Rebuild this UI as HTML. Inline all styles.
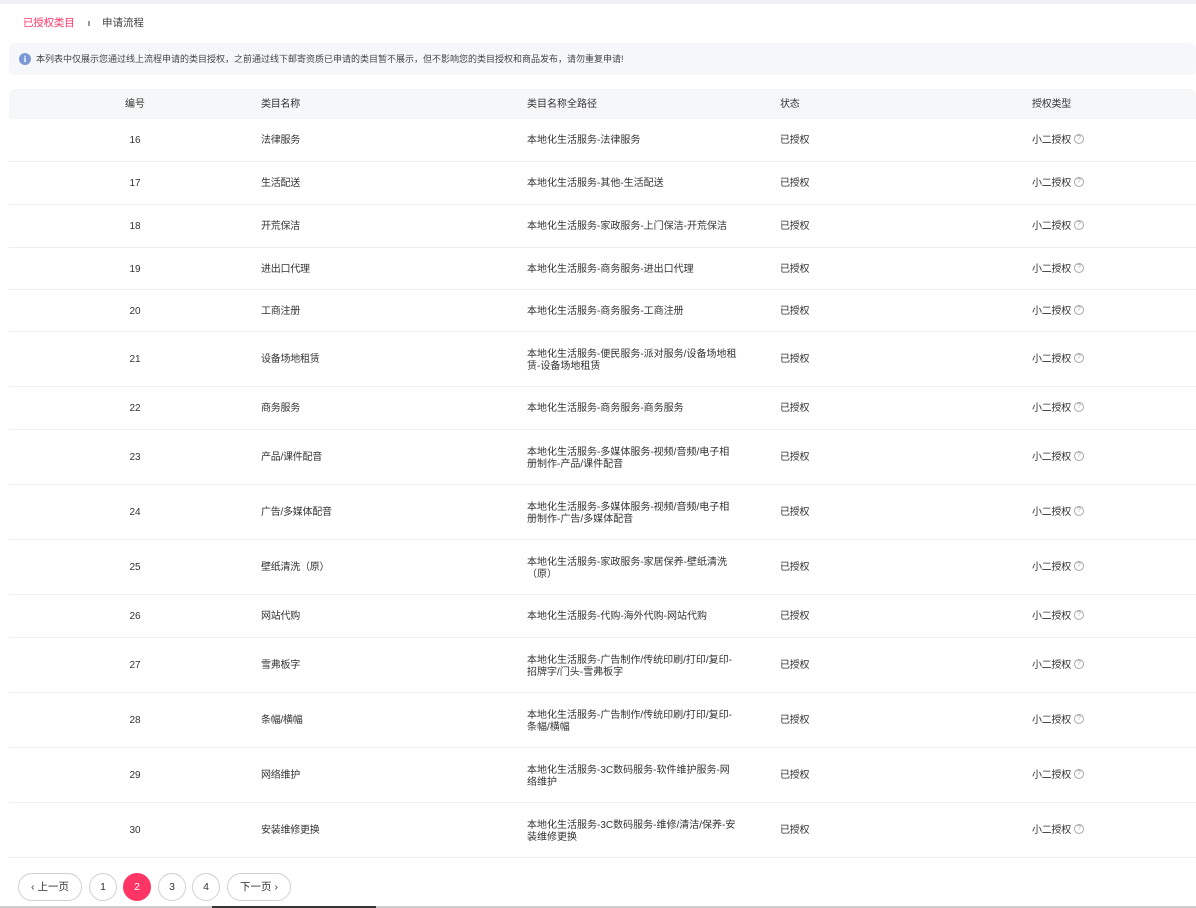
<!DOCTYPE html>
<html><head><meta charset="utf-8"><style>
*{margin:0;padding:0;box-sizing:border-box}
body{width:1196px;height:908px;overflow:hidden;background:#fff;font-family:"Liberation Sans","Noto Sans CJK SC",sans-serif;color:#333;font-size:10px;position:relative}
.top{height:4px;background:#eef0f5}
.tabs{position:absolute;top:16px;left:23px;font-size:10.5px;line-height:14px}
.tabs .a{color:#ff3566;letter-spacing:-0.2px}
.tabs .sep{position:absolute;left:65px;top:5px;width:2px;height:5px;background:#999}
.tabs .b{position:absolute;left:79px;top:0;white-space:nowrap;color:#444}
.note{position:absolute;left:9px;top:43px;width:1187px;height:32px;background:#f6f7fa;border-radius:6px;font-size:9px;line-height:32px;padding-left:27px;color:#444;white-space:nowrap}
.note i{position:absolute;left:10px;top:10px;width:12px;height:12px;border-radius:50%;background:#7b97d6;color:#fff;font-style:normal;font-size:9px;line-height:12px;text-align:center;font-weight:bold;font-family:"Liberation Serif",serif}
.tbl{position:absolute;left:9px;top:89px;width:1187px}
.hd{height:30px;background:#f6f7f9;border-radius:6px 6px 0 0;position:relative}
.row{position:relative;border-bottom:1px solid #eeeff2}
.c{position:absolute;top:50%;transform:translateY(-42%);white-space:nowrap;line-height:12px;letter-spacing:-0.25px}
.c1{left:0;width:252px;text-align:center;letter-spacing:0}
.c2{left:252px}.c3{left:518px;letter-spacing:0}.c4{left:771px}.c5{left:1023px}
.q{display:inline-block;width:10px;height:10px;border:1px solid #aaa;border-radius:50%;font-size:7px;line-height:8px;text-align:center;color:#999;margin-left:3px;vertical-align:middle;letter-spacing:0;position:relative;top:-1px}
.pg{position:absolute;top:873px;height:28px;border:1px solid #cfd0d6;border-radius:14px;font-size:10.5px;line-height:26px;text-align:center;color:#333}
.on{background:#ff3566;border-color:#ff3566;color:#fff}
</style></head><body>
<div class="top"></div>
<div class="tabs"><span class="a">已授权类目</span><span class="sep"></span><span class="b">申请流程</span></div>
<div class="note"><i>i</i>本列表中仅展示您通过线上流程申请的类目授权，之前通过线下邮寄资质已申请的类目暂不展示，但不影响您的类目授权和商品发布，请勿重复申请!</div>
<div class="tbl">
<div class="hd"><span class="c c1">编号</span><span class="c c2">类目名称</span><span class="c c3">类目名称全路径</span><span class="c c4">状态</span><span class="c c5">授权类型</span></div>
<div class="row" style="height:43px"><span class="c c1">16</span><span class="c c2">法律服务</span><span class="c c3">本地化生活服务-法律服务</span><span class="c c4">已授权</span><span class="c c5">小二授权<span class="q">?</span></span></div>
<div class="row" style="height:43px"><span class="c c1">17</span><span class="c c2">生活配送</span><span class="c c3">本地化生活服务-其他-生活配送</span><span class="c c4">已授权</span><span class="c c5">小二授权<span class="q">?</span></span></div>
<div class="row" style="height:43px"><span class="c c1">18</span><span class="c c2">开荒保洁</span><span class="c c3">本地化生活服务-家政服务-上门保洁-开荒保洁</span><span class="c c4">已授权</span><span class="c c5">小二授权<span class="q">?</span></span></div>
<div class="row" style="height:42px"><span class="c c1">19</span><span class="c c2">进出口代理</span><span class="c c3">本地化生活服务-商务服务-进出口代理</span><span class="c c4">已授权</span><span class="c c5">小二授权<span class="q">?</span></span></div>
<div class="row" style="height:42px"><span class="c c1">20</span><span class="c c2">工商注册</span><span class="c c3">本地化生活服务-商务服务-工商注册</span><span class="c c4">已授权</span><span class="c c5">小二授权<span class="q">?</span></span></div>
<div class="row" style="height:55px"><span class="c c1">21</span><span class="c c2">设备场地租赁</span><span class="c c3">本地化生活服务-便民服务-派对服务/设备场地租<br>赁-设备场地租赁</span><span class="c c4">已授权</span><span class="c c5">小二授权<span class="q">?</span></span></div>
<div class="row" style="height:43px"><span class="c c1">22</span><span class="c c2">商务服务</span><span class="c c3">本地化生活服务-商务服务-商务服务</span><span class="c c4">已授权</span><span class="c c5">小二授权<span class="q">?</span></span></div>
<div class="row" style="height:55px"><span class="c c1">23</span><span class="c c2">产品/课件配音</span><span class="c c3">本地化生活服务-多媒体服务-视频/音频/电子相<br>册制作-产品/课件配音</span><span class="c c4">已授权</span><span class="c c5">小二授权<span class="q">?</span></span></div>
<div class="row" style="height:55px"><span class="c c1">24</span><span class="c c2">广告/多媒体配音</span><span class="c c3">本地化生活服务-多媒体服务-视频/音频/电子相<br>册制作-广告/多媒体配音</span><span class="c c4">已授权</span><span class="c c5">小二授权<span class="q">?</span></span></div>
<div class="row" style="height:55px"><span class="c c1">25</span><span class="c c2">壁纸清洗（原）</span><span class="c c3">本地化生活服务-家政服务-家居保养-壁纸清洗<br>（原）</span><span class="c c4">已授权</span><span class="c c5">小二授权<span class="q">?</span></span></div>
<div class="row" style="height:43px"><span class="c c1">26</span><span class="c c2">网站代购</span><span class="c c3">本地化生活服务-代购-海外代购-网站代购</span><span class="c c4">已授权</span><span class="c c5">小二授权<span class="q">?</span></span></div>
<div class="row" style="height:55px"><span class="c c1">27</span><span class="c c2">雪弗板字</span><span class="c c3">本地化生活服务-广告制作/传统印刷/打印/复印-<br>招牌字/门头-雪弗板字</span><span class="c c4">已授权</span><span class="c c5">小二授权<span class="q">?</span></span></div>
<div class="row" style="height:55px"><span class="c c1">28</span><span class="c c2">条幅/横幅</span><span class="c c3">本地化生活服务-广告制作/传统印刷/打印/复印-<br>条幅/横幅</span><span class="c c4">已授权</span><span class="c c5">小二授权<span class="q">?</span></span></div>
<div class="row" style="height:55px"><span class="c c1">29</span><span class="c c2">网络维护</span><span class="c c3">本地化生活服务-3C数码服务-软件维护服务-网<br>络维护</span><span class="c c4">已授权</span><span class="c c5">小二授权<span class="q">?</span></span></div>
<div class="row" style="height:55px"><span class="c c1">30</span><span class="c c2">安装维修更换</span><span class="c c3">本地化生活服务-3C数码服务-维修/清洁/保养-安<br>装维修更换</span><span class="c c4">已授权</span><span class="c c5">小二授权<span class="q">?</span></span></div>
</div>
<div class="pg" style="left:18px;width:64px">‹ 上一页</div>
<div class="pg" style="left:89px;width:28px">1</div>
<div class="pg on" style="left:123px;width:28px">2</div>
<div class="pg" style="left:158px;width:28px">3</div>
<div class="pg" style="left:192px;width:28px">4</div>
<div class="pg" style="left:227px;width:64px">下一页 ›</div>
<div style="position:absolute;left:0;top:906px;width:1196px;height:2px;background:#ccc"></div>
<div style="position:absolute;left:212px;top:906px;width:164px;height:2px;background:#333"></div>
</body></html>
